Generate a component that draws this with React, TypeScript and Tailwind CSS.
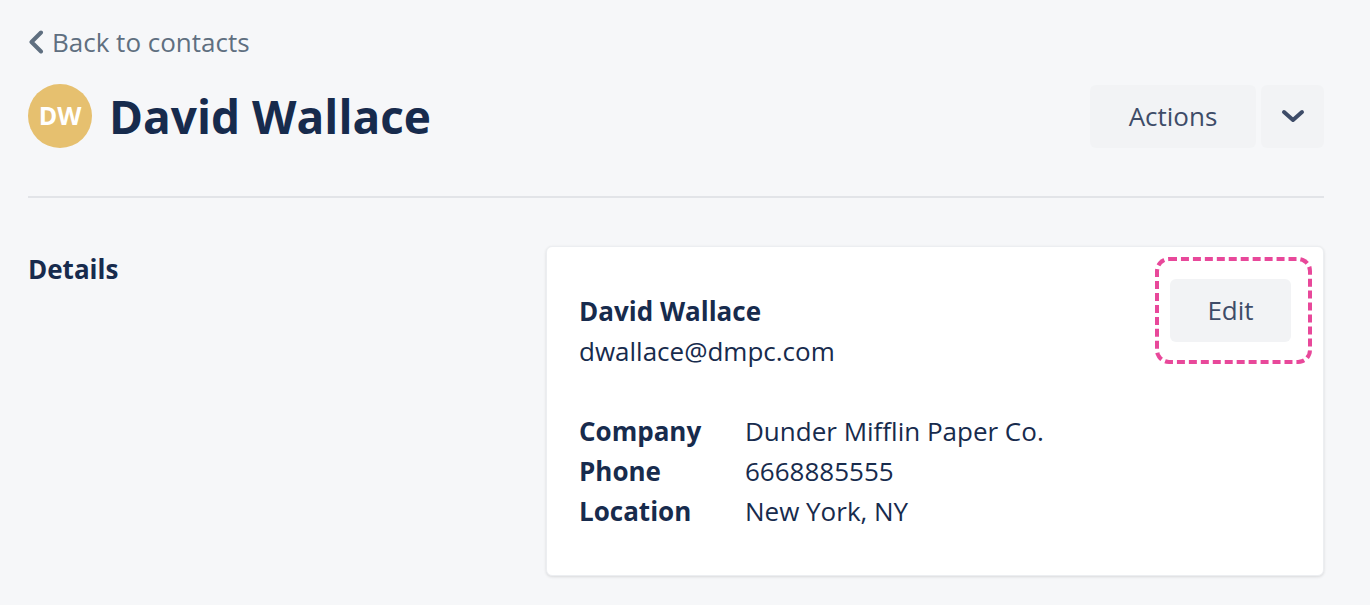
const details = [
    { label: 'Company', value: 'Dunder Mifflin Paper Co.' },
    { label: 'Phone', value: '6668885555' },
    { label: 'Location', value: 'New York, NY' },
];

export default function App() {
    return (
        <div className="min-h-screen bg-[#f6f7f9] text-[#172b4d] font-['Open_Sans','Lato',sans-serif]">
            <div className="px-[28px] pt-[24px] w-[1352px]">
                <a href="#" className="flex items-center gap-[8px] text-[26px] leading-[36px] text-[#5f6f80]">
                    <svg width="16" height="24" viewBox="0 0 16 24" fill="none" stroke="currentColor" strokeWidth="4" strokeLinecap="round" strokeLinejoin="round">
                        <polyline points="13,2.5 3.5,12 13,21.5" />
                    </svg>
                    Back to contacts
                </a>

                <div className="flex items-center justify-between mt-[24px] pb-[48px] border-b-2 border-[#e2e4e8]">
                    <div className="flex items-center gap-[17px]">
                        <div className="w-[64px] h-[64px] rounded-full bg-[#e6c06f] flex items-center justify-center text-white font-bold text-[25px]">
                            DW
                        </div>
                        <h1 className="text-[46px] font-bold leading-[60px] text-[#172b4d]">David Wallace</h1>
                    </div>
                    <div className="flex items-center gap-[5px]">
                        <button className="w-[166px] h-[63px] rounded-[6px] bg-[#f2f3f5] text-[26px] text-[#3e4c68]">
                            Actions
                        </button>
                        <button className="w-[63px] h-[63px] rounded-[6px] bg-[#f2f3f5] flex items-center justify-center text-[#3e4c68]">
                            <svg width="24" height="14" viewBox="0 0 24 14" fill="none" stroke="currentColor" strokeWidth="4" strokeLinecap="round" strokeLinejoin="round">
                                <polyline points="3,3 12,11 21,3" />
                            </svg>
                        </button>
                    </div>
                </div>

                <div className="flex mt-[48px]">
                    <h2 className="w-[518px] text-[26px] font-bold leading-[48px] -mt-[1px]">Details</h2>
                    <div className="flex-1 bg-white rounded-[6px] shadow-[0_1px_3px_rgba(0,0,0,0.12)] border border-[#eceef1] pl-[32px] pr-[11px] pt-[10px] pb-[44px] flex justify-between">
                        <div className="pt-[34px]">
                            <div className="text-[26px] font-bold leading-[40px]">David Wallace</div>
                            <div className="text-[26px] leading-[40px]">dwallace@dmpc.com</div>
                            <div className="mt-[40px] grid grid-cols-[166px_1fr] text-[26px] leading-[40px]">
                                {details.map(d => (
                                    <div key={d.label} className="contents">
                                        <span className="font-bold">{d.label}</span>
                                        <span>{d.value}</span>
                                    </div>
                                ))}
                            </div>
                        </div>
                        <div className="self-start border-[4px] border-dashed border-[#e8489a] rounded-[14px] pl-[11px] pr-[17px] py-[18px]">
                            <button className="w-[121px] h-[63px] rounded-[6px] bg-[#f2f3f5] text-[26px] text-[#3e4c68]">
                                Edit
                            </button>
                        </div>
                    </div>
                </div>
            </div>
        </div>
    );
}
